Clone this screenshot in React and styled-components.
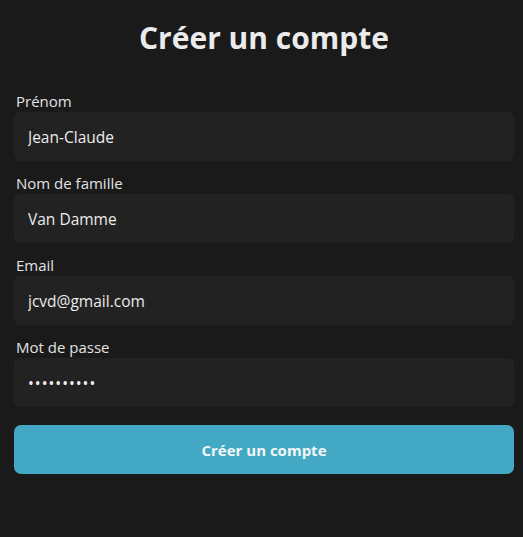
import React from "react";
import styled, { createGlobalStyle } from "styled-components";

const GlobalStyle = createGlobalStyle`
  html, body {
    margin: 0;
    padding: 0;
    background: #1a1a1a;
  }
  body {
    font-family: "Open Sans", "Noto Sans", sans-serif;
    color: #e6e6e6;
  }
`;

const Page = styled.div`
  min-height: 537px;
  padding: 14px 9px 0 14px;
  box-sizing: border-box;
`;

const Title = styled.h1`
  margin: 0 0 28px;
  text-align: center;
  font-size: 30px;
  line-height: 48px;
  font-weight: 700;
  color: #ebebeb;
`;

const Form = styled.form`
  display: flex;
  flex-direction: column;
`;

const Field = styled.div`
  display: flex;
  flex-direction: column;
  margin-bottom: 11px;
`;

const Label = styled.label`
  font-size: 15px;
  line-height: 22px;
  padding-left: 2px;
  color: #e2e2e2;
`;

const Input = styled.input`
  box-sizing: border-box;
  height: 49px;
  padding: 0 14px;
  border: none;
  border-radius: 6px;
  background: #222222;
  color: #ececec;
  font-family: inherit;
  font-size: 15.5px;
  outline: none;
  letter-spacing: ${(p) => (p.type === "password" ? "1px" : "normal")};
`;

const Button = styled.button`
  margin-top: 7px;
  height: 49px;
  border: none;
  border-radius: 7px;
  background: #43a8c3;
  color: #f4f7f8;
  font-family: inherit;
  font-size: 15px;
  font-weight: 700;
  cursor: pointer;
`;

const fields = [
  { label: "Prénom", value: "Jean-Claude", type: "text" },
  { label: "Nom de famille", value: "Van Damme", type: "text" },
  { label: "Email", value: "jcvd@gmail.com", type: "email" },
  { label: "Mot de passe", value: "jcvdjcvd12", type: "password" },
];

export default function App() {
  return (
    <>
      <GlobalStyle />
      <Page>
        <Title>Créer un compte</Title>
        <Form onSubmit={(e) => e.preventDefault()}>
          {fields.map((f) => (
            <Field key={f.label}>
              <Label>{f.label}</Label>
              <Input type={f.type} defaultValue={f.value} />
            </Field>
          ))}
          <Button type="submit">Créer un compte</Button>
        </Form>
      </Page>
    </>
  );
}
